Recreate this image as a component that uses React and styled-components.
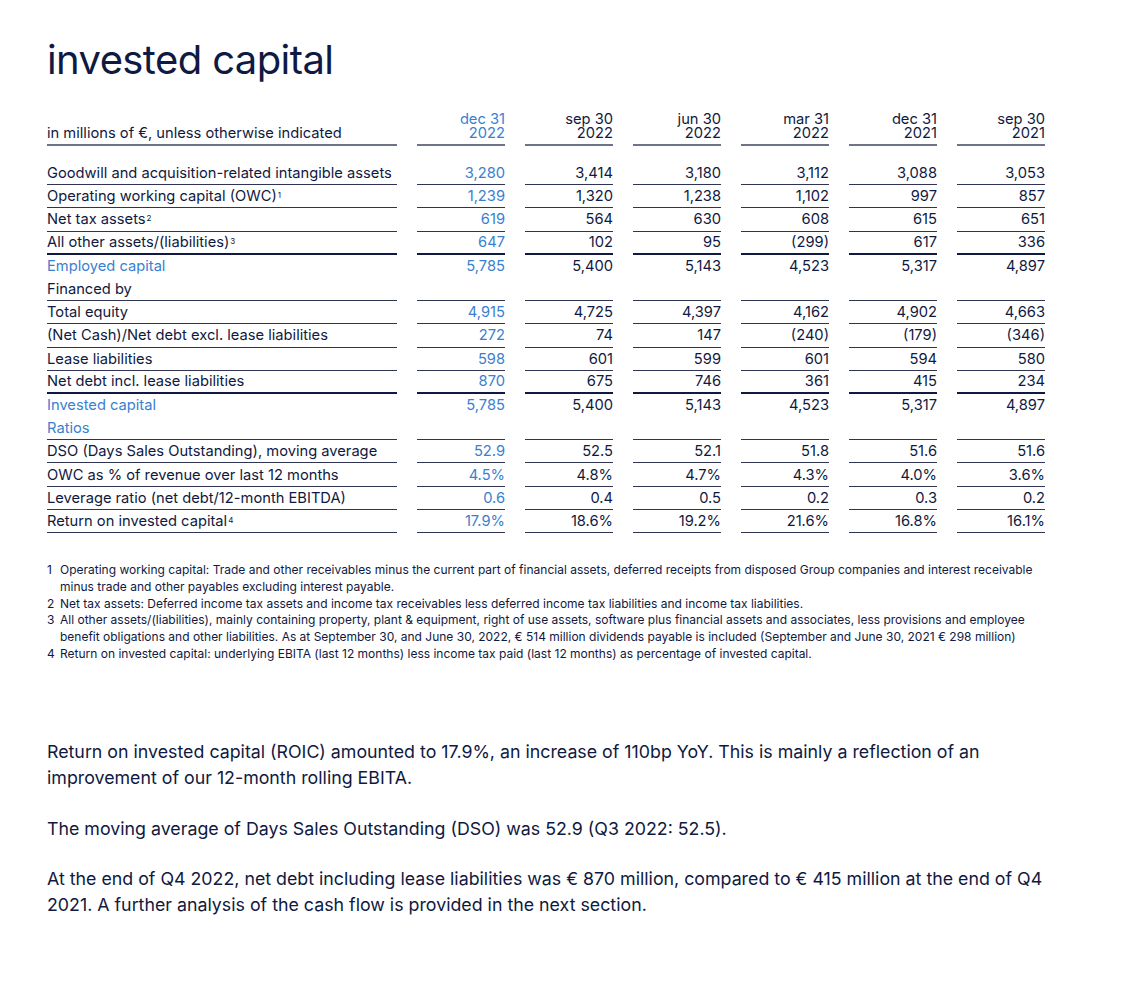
import React from "react";
import styled, { createGlobalStyle } from "styled-components";

const NAVY = "#0f1941";
const BLUE = "#3a80cf";

const GlobalStyle = createGlobalStyle`
  body {
    margin: 0;
    background: #fff;
    font-family: Inter, "Noto Sans", sans-serif;
    color: ${NAVY};
  }
`;

const Page = styled.div`
  padding: 36px 0 40px 47px;
  width: 1010px;
`;

const Title = styled.h1`
  margin: 0 0 26px;
  font-size: 40px;
  font-weight: 400;
  letter-spacing: -0.6px;
  line-height: 48px;
`;

const Row = styled.div`
  display: grid;
  grid-template-columns: 350px repeat(6, 88px);
  column-gap: 20px;
  width: 998px;
  ${(p) => p.$spaced && "margin-top: 16px;"}
`;

const lineFor = (line) => {
  if (line === "thick") return `border-bottom: 2px solid ${NAVY};`;
  if (line === "none") return "border-bottom: 1px solid transparent;";
  return "border-bottom: 1px solid #2e3452;";
};

const Cell = styled.div`
  box-sizing: border-box;
  height: 23.2px;
  display: flex;
  align-items: center;
  font-size: 14.7px;
  white-space: nowrap;
  color: ${(p) => (p.$blue ? BLUE : NAVY)};
  justify-content: ${(p) => (p.$num ? "flex-end" : "flex-start")};
  ${(p) => lineFor(p.$line)}
`;

const HeadCell = styled.div`
  box-sizing: border-box;
  height: 36px;
  display: flex;
  flex-direction: column;
  justify-content: flex-end;
  align-items: ${(p) => (p.$num ? "flex-end" : "flex-start")};
  padding-bottom: 4px;
  font-size: 14.7px;
  line-height: 13.5px;
  color: ${(p) => (p.$blue ? BLUE : NAVY)};
  border-bottom: 2px solid #6e7388;
  text-align: right;
`;

const Sup = styled.sup`
  font-size: 8px;
  line-height: 0;
  margin-left: 1px;
  position: relative;
  top: -1px;
`;

const Notes = styled.ol`
  list-style: none;
  margin: 29px 0 0;
  padding: 0;
  width: 1000px;
`;

const Note = styled.li`
  display: grid;
  grid-template-columns: 13px 1fr;
  font-size: 12px;
  line-height: 16.8px;
`;

const Text = styled.p`
  margin: 0 0 24.5px;
  font-size: 17.8px;
  line-height: 26px;
  width: 1010px;
`;

const Body = styled.div`
  margin-top: 76.5px;
`;

const periods = [
  ["dec 31", "2022"],
  ["sep 30", "2022"],
  ["jun 30", "2022"],
  ["mar 31", "2022"],
  ["dec 31", "2021"],
  ["sep 30", "2021"],
];

const rows = [
  { label: "Goodwill and acquisition-related intangible assets", values: ["3,280", "3,414", "3,180", "3,112", "3,088", "3,053"] },
  { label: "Operating working capital (OWC)", sup: "1", values: ["1,239", "1,320", "1,238", "1,102", "997", "857"] },
  { label: "Net tax assets", sup: "2", values: ["619", "564", "630", "608", "615", "651"] },
  { label: "All other assets/(liabilities)", sup: "3", line: "thick", values: ["647", "102", "95", "(299)", "617", "336"] },
  { label: "Employed capital", blue: true, line: "none", values: ["5,785", "5,400", "5,143", "4,523", "5,317", "4,897"] },
  { label: "Financed by", values: ["", "", "", "", "", ""] },
  { label: "Total equity", values: ["4,915", "4,725", "4,397", "4,162", "4,902", "4,663"] },
  { label: "(Net Cash)/Net debt excl. lease liabilities", values: ["272", "74", "147", "(240)", "(179)", "(346)"] },
  { label: "Lease liabilities", values: ["598", "601", "599", "601", "594", "580"] },
  { label: "Net debt incl. lease liabilities", line: "thick", values: ["870", "675", "746", "361", "415", "234"] },
  { label: "Invested capital", blue: true, line: "none", values: ["5,785", "5,400", "5,143", "4,523", "5,317", "4,897"] },
  { label: "Ratios", blue: true, values: ["", "", "", "", "", ""] },
  { label: "DSO (Days Sales Outstanding), moving average", values: ["52.9", "52.5", "52.1", "51.8", "51.6", "51.6"] },
  { label: "OWC as % of revenue over last 12 months", values: ["4.5%", "4.8%", "4.7%", "4.3%", "4.0%", "3.6%"] },
  { label: "Leverage ratio (net debt/12-month EBITDA)", values: ["0.6", "0.4", "0.5", "0.2", "0.3", "0.2"] },
  { label: "Return on invested capital", sup: "4", values: ["17.9%", "18.6%", "19.2%", "21.6%", "16.8%", "16.1%"] },
];

const notes = [
  "Operating working capital: Trade and other receivables minus the current part of financial assets, deferred receipts from disposed Group companies and interest receivable minus trade and other payables excluding interest payable.",
  "Net tax assets: Deferred income tax assets and income tax receivables less deferred income tax liabilities and income tax liabilities.",
  "All other assets/(liabilities), mainly containing property, plant & equipment, right of use assets, software plus financial assets and associates, less provisions and employee benefit obligations and other liabilities. As at September 30, and June 30, 2022, € 514 million dividends payable is included (September and June 30, 2021 € 298 million)",
  "Return on invested capital: underlying EBITA (last 12 months) less income tax paid (last 12 months) as percentage of invested capital.",
];

const App = () => {
  return (
    <Page>
      <GlobalStyle />
      <Title>invested capital</Title>

      <Row>
        <HeadCell>in millions of €, unless otherwise indicated</HeadCell>
        {periods.map(([day, year], i) => (
          <HeadCell key={i} $num $blue={i === 0}>
            <span>{day}</span>
            <span>{year}</span>
          </HeadCell>
        ))}
      </Row>

      {rows.map((row, r) => (
        <Row key={row.label} $spaced={r === 0}>
          <Cell $blue={row.blue} $line={row.line}>
            {row.label}
            {row.sup && <Sup>{row.sup}</Sup>}
          </Cell>
          {row.values.map((v, i) => (
            <Cell key={i} $num $blue={i === 0} $line={row.line}>
              {v}
            </Cell>
          ))}
        </Row>
      ))}

      <Notes>
        {notes.map((n, i) => (
          <Note key={i}>
            <span>{i + 1}</span>
            <span>{n}</span>
          </Note>
        ))}
      </Notes>

      <Body>
        <Text>
          Return on invested capital (ROIC) amounted to 17.9%, an increase of
          110bp YoY. This is mainly a reflection of an improvement of our
          12-month rolling EBITA.
        </Text>
        <Text>
          The moving average of Days Sales Outstanding (DSO) was 52.9 (Q3 2022:
          52.5).
        </Text>
        <Text>
          At the end of Q4 2022, net debt including lease liabilities was € 870
          million, compared to € 415 million at the end of Q4 2021. A further
          analysis of the cash flow is provided in the next section.
        </Text>
      </Body>
    </Page>
  );
};

export default App;
